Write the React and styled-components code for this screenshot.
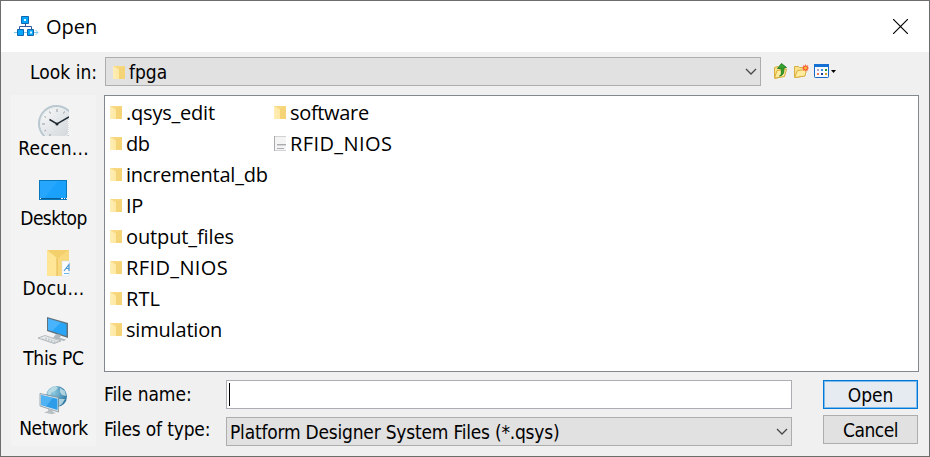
import React from "react";
import styled, { createGlobalStyle } from "styled-components";

const GlobalStyle = createGlobalStyle`
  * { box-sizing: border-box; }
  body { margin: 0; background: #f0f0f0; }
  svg { display: block; flex: none; }
`;

const Window = styled.div`
  width: 930px;
  height: 457px;
  border: 1px solid #6d6d6e;
  background: #f0f0f0;
  color: #000;
  font-family: "DejaVu Sans Condensed", "DejaVu Sans", sans-serif;
  font-size: 19px;
  line-height: 22px;
  overflow: hidden;
  display: flex;
  flex-direction: column;
`;

const TitleBar = styled.header`
  flex: none;
  height: 51px;
  padding: 0 21px 0 13px;
  background: #fff;
  display: flex;
  align-items: center;
  justify-content: space-between;
`;

const TitleGroup = styled.div`
  display: flex;
  align-items: center;
  gap: 7px;
  font-family: "Open Sans", sans-serif;
  font-size: 20px;
  padding-top: 1px;
  svg { margin: -3px 0 0; }
`;

const Text = styled.span`
  white-space: nowrap;
  letter-spacing: ${(p) => p.$ls || 0}px;
`;

const LookRow = styled.div`
  flex: none;
  height: 38px;
  padding: 5px 0 4px 29px;
  display: flex;
  align-items: center;
`;

const LookLabel = styled.label`
  width: 75px;
  flex: none;
`;

const Combo = styled.div`
  width: ${(p) => p.$width}px;
  height: 29px;
  flex: none;
  padding: 1px 3px 0 ${(p) => p.$pad}px;
  background: #e1e1e1;
  border: 1px solid #adadad;
  display: flex;
  align-items: center;
  gap: 4px;
  & > svg:last-child { margin-left: auto; }
`;

const Tools = styled.div`
  display: flex;
  align-items: center;
  margin: -1px 0 0 12px;
  gap: 4px;
  svg:last-child { margin-left: 1px; }
`;

const Content = styled.main`
  display: grid;
  grid-template-columns: 85px 815px;
  column-gap: 8px;
  padding: 5px 0 0 10px;
`;

const Places = styled.nav`
  height: 351px;
  background: #f3f3f3;
  display: flex;
  flex-direction: column;
`;

const Place = styled.div`
  height: 70px;
  display: flex;
  flex-direction: column;
  align-items: center;
`;

const PlaceIcon = styled.div`
  height: 42px;
  width: 100%;
  flex: none;
  svg { width: 85px; height: 42px; }
`;

const Panel = styled.section`
  display: flex;
  flex-direction: column;
`;

const FileList = styled.div`
  height: 277px;
  background: #fff;
  border: 1px solid #828790;
  padding: 1px 0 0 5px;
  display: grid;
  grid-template-rows: repeat(8, 31px);
  grid-template-columns: 164px 140px;
  grid-auto-flow: column;
  font-family: "Open Sans", sans-serif;
  font-size: 20px;
`;

const FileItem = styled.div`
  display: flex;
  align-items: center;
  gap: 4px;
`;

const Form = styled.div`
  display: grid;
  grid-template-columns: 122px 566px 95px;
  grid-template-rows: 29px 29px;
  row-gap: 8px;
  padding-top: 8px;
`;

const FieldLabel = styled.label`
  padding-top: ${(p) => p.$top}px;
`;

const Field = styled.div`
  height: 29px;
  background: #fff;
  border: 1px solid #abadb3;
  padding: 2px;
`;

const Caret = styled.div`
  width: 1px;
  height: 23px;
  background: #000;
`;

const Button = styled.button`
  height: 29px;
  margin: ${(p) => (p.$primary ? "0 0 0 31px" : "-2px 0 0 31px")};
  width: 95px;
  padding: 0;
  font: inherit;
  color: #000;
  background: ${(p) => (p.$primary ? "#e5ebf1" : "#e1e1e1")};
  border: 1px solid ${(p) => (p.$primary ? "#0078d7" : "#adadad")};
  box-shadow: ${(p) => (p.$primary ? "inset 0 0 0 1px #7fbbea" : "none")};
`;

const FolderIcon = () => (
  <svg width="12" height="13" viewBox="0 0 12 13">
    <path d="M0 0H12V13H0Z" fill="#f8d982" />
    <path d="M6 2L12 0V13H6Z" fill="#f5d478" />
    <path d="M0 0L6 3.5V13H0Z" fill="#ffe9a6" />
    <path d="M0 0L3 1.7V13H0Z" fill="#fff0bd" opacity=".5" />
  </svg>
);

const FileIcon = () => (
  <svg width="12" height="15" viewBox="0 0 12 15">
    <path d="M0 0H12V15H0Z" fill="#f4f4f4" />
    <path d="M0 0H12V1H1V14H12V15H0Z" fill="#d0d2d4" />
    <path d="M0 0H1V15H0Z" fill="#a9abad" />
    <path d="M3 8H12V9H3ZM3 12H10V13H3Z" fill="#a9acae" />
    <path d="M3 9H12V10H3Z" fill="#d4d6d8" />
  </svg>
);

const AppIcon = () => (
  <svg width="25" height="22" viewBox="0 0 25 22">
    <path d="M11.5 8V12M5.500 14V11.500H17.500V14" fill="none" stroke="#315b9c" />
    <path d="M0 17.500H24M21.500 15L24 17.500L21.500 20" fill="none" stroke="#7cc9ee" />
    <g fill="#06a6fb" stroke="#1266ae">
      <path d="M7.500 1.500H14.500V8.500H7.500Z" />
      <path d="M3.500 14.500H9.500V20.500H3.500ZM13.500 14.500H19.500V20.500H13.500Z" />
    </g>
    <path d="M10 4H12V6H10ZM16 16.500H18V18.500H16Z" fill="#dff5ff" />
  </svg>
);

const CloseIcon = () => (
  <svg width="15" height="15" viewBox="0 0 15 15">
    <path d="M0 0L15 15M15 0L0 15" stroke="#000" strokeWidth="1.150" />
  </svg>
);

const Chevron = () => (
  <svg width="12" height="8" viewBox="0 0 12 8">
    <path d="M1 1L6 6L11 1" fill="none" stroke="#484848" strokeWidth="1.300" />
  </svg>
);

const UpFolderIcon = () => (
  <svg width="16" height="18" viewBox="0 0 16 18">
    <path d="M1.500 16V5.500L5 4.500L6 6H11.500V14L2 16.500Z" fill="#f9e38d" stroke="#d8ad3b" />
    <path d="M1.500 16L4 8.500L13.500 7L11.500 14.500Z" fill="#ffec9e" stroke="#d8ad3b" />
    <path d="M6.500 14C9 13 8.500 10 8 6.500H4.500L8.500 1.500L13.500 5.500L10.500 6C11.500 10 10.500 13.500 6.500 14Z" fill="#35a12c" stroke="#16751a" strokeWidth=".8" />
  </svg>
);

const NewFolderIcon = () => (
  <svg width="16" height="18" viewBox="0 0 16 18">
    <path d="M1.500 15V4.500H5.500L6.500 5.500H11.500V14L2 15.500Z" fill="#fae18b" stroke="#d9ae42" />
    <path d="M1.500 15.500L4.500 8.500L13.500 7.500L12 14Z" fill="#ffec9f" stroke="#d9ae42" />
    <path d="M12.500 2.500V9.500M9 6H16M10 3.500L15 8.500M15 3.500L10 8.500" stroke="#fa8060" strokeWidth="1.100" />
    <circle cx="12.500" cy="6" r="2" fill="#ffbd3d" stroke="#ef4c2c" />
  </svg>
);

const ViewIcon = () => (
  <svg width="25" height="18" viewBox="0 0 25 18">
    <rect x=".5" y="2.500" width="14" height="13" rx=".8" fill="#f7fbff" stroke="#1467c8" />
    <path d="M0 2H15V5H0Z" fill="#1470d3" />
    <path d="M3 7H5V9H3Z" fill="#b5a4bd" />
    <path d="M7 7H9V9H7Z" fill="#3e8de0" />
    <path d="M11 7H13V9H11Z" fill="#269332" />
    <path d="M3 11H5V13H3Z" fill="#f07852" />
    <path d="M7 11H9V13H7Z" fill="#173f9e" />
    <path d="M11 11H13V13H11Z" fill="#d1a21c" />
    <path d="M17 8H22L19.500 11Z" fill="#000" />
  </svg>
);

const RecentIcon = () => (
  <svg viewBox="0 0 85 42">
    <defs>
      <linearGradient id="face" x1="0" y1="0" x2="1" y2="1">
        <stop offset="0" stopColor="#fafbfc" />
        <stop offset="1" stopColor="#cdd2d6" />
      </linearGradient>
      <clipPath id="clockClip"><path d="M26 8H58V41H26Z" /></clipPath>
    </defs>
    <g clipPath="url(#clockClip)">
      <circle cx="45.500" cy="28.500" r="17.500" fill="url(#face)" stroke="#b9c7cf" strokeWidth="2" />
      <circle cx="45.500" cy="28.500" r="15.800" fill="none" stroke="#e8edf0" strokeWidth="1" />
      <path d="M46 14V17M38.500 16.500L39.500 18.500M33.500 21.500L35 22.500M31 29H34M33.500 36L35 35M53.500 16.500L52.500 18.500M38.500 41L39.500 39" stroke="#949b9f" />
      <path d="M38.500 24.500L46 29L58 22" fill="none" stroke="#202a32" strokeWidth="1.500" />
      <circle cx="46" cy="29" r="1.500" fill="#202a32" />
    </g>
    <path d="M57.500 25V41" stroke="#fff" strokeDasharray="1 1" />
  </svg>
);

const DesktopIcon = () => (
  <svg viewBox="0 0 85 42">
    <rect x="28.500" y="15.500" width="27" height="19" fill="#1aa1fb" stroke="#0878bc" />
    <path d="M29 34V16H47L33 34Z" fill="#37adff" opacity=".45" />
    <path d="M29 33H56V34H29Z" fill="#075e99" />
    <path d="M29 33H30V34H29ZM50 33H52V34H50ZM53 33H54V34H53ZM55 33H56V34H55Z" fill="#fff" />
  </svg>
);

const DocumentsIcon = () => (
  <svg viewBox="0 0 85 42">
    <path d="M36 15H58V41H36Z" fill="#f4d06c" />
    <path d="M46 24L58 15V41H46Z" fill="#f8d97e" />
    <path d="M36 15L46 23V41H36Z" fill="#ffe596" />
    <path d="M46 23V41" stroke="#e3b952" />
    <path d="M51 26H58V41H51Z" fill="#fafcff" stroke="#d7dce1" strokeWidth=".5" />
    <path d="M53 36L58 29.500V36M54.500 33.500H58" fill="none" stroke="#4b97cf" strokeWidth="1.200" />
    <path d="M53 38.500H58" stroke="#67b7e7" />
  </svg>
);

const ComputerIcon = () => (
  <svg viewBox="0 0 85 42">
    <path d="M36 12L57 18V33L36 26Z" fill="#61717c" />
    <path d="M37 13.500L55.500 19V31L37 25Z" fill="#28a5f7" />
    <path d="M37 13.500L50 17.500L41 26L37 25Z" fill="#69c3ff" opacity=".5" />
    <path d="M45 29L50 30L49 33L55 34.500L53 36L42 33Z" fill="#aeb8be" />
    <path d="M27 33L34 30.500L50 36L43 38.500Z" fill="#e7ebed" stroke="#a4abaf" strokeWidth=".8" />
    <path d="M31 34L45 38M34 33L47 37" stroke="#a9b0b4" strokeWidth=".8" strokeDasharray="2 1" />
  </svg>
);

const NetworkIcon = () => (
  <svg viewBox="0 0 85 42">
    <defs>
      <radialGradient id="globe" cx=".35" cy=".3" r=".8">
        <stop offset="0" stopColor="#8fcbe2" />
        <stop offset="1" stopColor="#226d9b" />
      </radialGradient>
    </defs>
    <circle cx="45.500" cy="21.500" r="10.500" fill="url(#globe)" />
    <path d="M37 16L41 12L45 11L47 13L44 16L41 17L39 21L36 19ZM49 13L54 16L55 21L51 20L49 17ZM48 24L54 24L51 29L48 31Z" fill="#c7e2e9" opacity=".8" />
    <path d="M29 18.500L47.500 22.500V37L29 31Z" fill="#dbe4e9" stroke="#647985" strokeWidth=".6" />
    <path d="M30 20L46.500 23.700V35L30 30Z" fill="#2e9de9" />
    <path d="M30 20L42 22.700L35 31.400L30 30Z" fill="#69c3fb" opacity=".55" />
    <path d="M37 34L42 35.500V37L45 38L41 39.200L33 37.500L37 36Z" fill="#b8c0c4" />
  </svg>
);

const PLACES = [
  ["Recen...", RecentIcon, 0.26],
  ["Desktop", DesktopIcon, -0.6],
  ["Docu...", DocumentsIcon, 0.25],
  ["This PC", ComputerIcon, -0.3],
  ["Network", NetworkIcon, -0.4],
];

const FILES = [
  [".qsys_edit", -0.21],
  ["db", -0.6],
  ["incremental_db", -0.22],
  ["IP", -0.3],
  ["output_files", -0.12],
  ["RFID_NIOS", 0.38],
  ["RTL", 0.1],
  ["simulation", -0.19],
  ["software", -0.33],
  ["RFID_NIOS", 0.4, true],
];

export default function App() {
  return (
    <Window>
      <GlobalStyle />
      <TitleBar>
        <TitleGroup>
          <AppIcon />
          <Text>Open</Text>
        </TitleGroup>
        <CloseIcon />
      </TitleBar>
      <LookRow>
        <LookLabel><Text $ls={0.05}>Look in:</Text></LookLabel>
        <Combo $width={656} $pad={7}>
          <FolderIcon />
          <Text>fpga</Text>
          <Chevron />
        </Combo>
        <Tools>
          <UpFolderIcon />
          <NewFolderIcon />
          <ViewIcon />
        </Tools>
      </LookRow>
      <Content>
        <Places>
          {PLACES.map(([name, Icon, ls]) => (
            <Place key={name}>
              <PlaceIcon><Icon /></PlaceIcon>
              <Text $ls={ls}>{name}</Text>
            </Place>
          ))}
        </Places>
        <Panel>
          <FileList>
            {FILES.map(([name, ls, isFile], i) => (
              <FileItem key={i}>
                {isFile ? <FileIcon /> : <FolderIcon />}
                <Text $ls={ls}>{name}</Text>
              </FileItem>
            ))}
          </FileList>
          <Form>
            <FieldLabel $top={3}><Text $ls={-0.05}>File name:</Text></FieldLabel>
            <Field><Caret /></Field>
            <Button $primary><Text $ls={-0.1}>Open</Text></Button>
            <FieldLabel $top={1}><Text $ls={-0.17}>Files of type:</Text></FieldLabel>
            <Combo $width={566} $pad={3}>
              <Text $ls={-0.21}>Platform Designer System Files (*.qsys)</Text>
              <Chevron />
            </Combo>
            <Button><Text $ls={-0.45}>Cancel</Text></Button>
          </Form>
        </Panel>
      </Content>
    </Window>
  );
}
